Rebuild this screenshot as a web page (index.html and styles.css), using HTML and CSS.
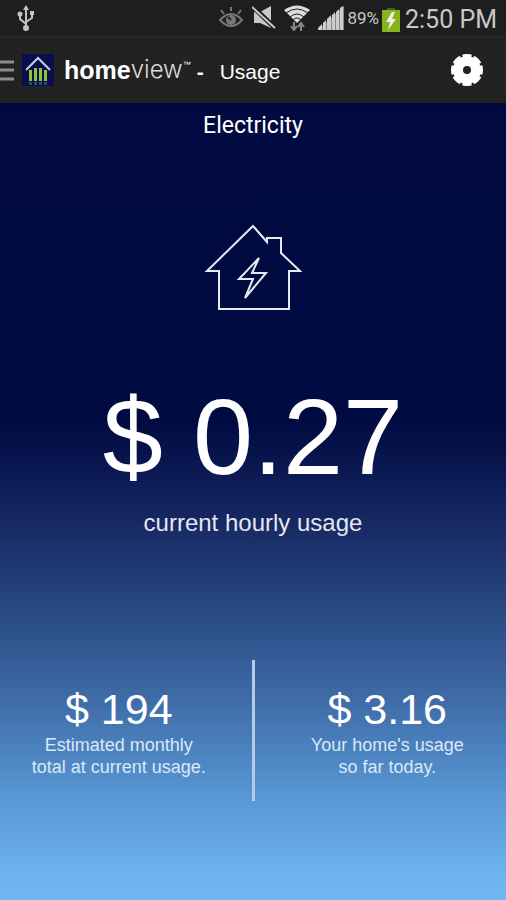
FILE: index.html
```html
<!DOCTYPE html>
<html lang="en">
<head>
    <meta charset="UTF-8">
    <meta name="viewport" content="width=device-width, initial-scale=1.0">
    <title>homeview - Usage</title>
    <link rel="stylesheet" href="styles.css">
</head>
<body>
    <div class="status-bar">
        <svg class="usb" width="18" height="26" viewBox="0 0 18 26" fill="none" stroke="#c4c4c4" stroke-width="2">
            <path d="M9 3v19M9 19l-6-5V9M9 17l6-4V8"/>
            <path d="M9 0l3 5H6z" fill="#c4c4c4" stroke="none"/>
            <circle cx="9" cy="23" r="3" fill="#c4c4c4" stroke="none"/>
            <circle cx="3" cy="9" r="2.5" fill="#c4c4c4" stroke="none"/>
            <path d="M13 6h4v4h-4z" fill="#c4c4c4" stroke="none"/>
        </svg>
        <div class="status-icons">
            <svg width="26" height="22" viewBox="0 0 26 22" fill="none" stroke="#777" stroke-width="2">
                <path d="M2 13Q13 1 24 13Q13 25 2 13z"/>
                <circle cx="13" cy="13" r="5" fill="#777" stroke="none"/>
                <path d="M10 10l3 3" stroke="#222"/>
                <path d="M3 3l3 4M13 0v4M23 3l-3 4"/>
            </svg>
            <svg width="24" height="26" viewBox="0 0 24 26">
                <path d="M2 7h6l11-6v22L8 18H2z" fill="#c8c8c8"/>
                <path d="M0 1l23 22" stroke="#1e1e1e" stroke-width="5"/>
                <path d="M0 2l23 21" stroke="#c8c8c8" stroke-width="2"/>
            </svg>
            <svg width="26" height="26" viewBox="0 0 26 26">
                <path d="M0 5Q13-4 26 5L13 18z" fill="#ddd"/>
                <path d="M2 8Q13 0 24 8M6 12Q13 6 20 12M9 15Q13 11 17 15" fill="none" stroke="#1e1e1e"/>
                <path d="M10 17v7M7 21l3 4 3-4M17 26v-7M14 22l3-4 3 4" fill="none" stroke="#888" stroke-width="2"/>
            </svg>
            <svg width="26" height="24" viewBox="0 0 26 24">
                <path d="M0 24L26 0v24z" fill="#888"/>
                <path d="M0 24v-2l4-4v6zM5 24v-7l3-3v10zM9 24V13l4-4v15zM14 24V9l3-3v18zM18 24V6l3-3v21zM22 24V2l3-2v24z" fill="#ccc"/>
            </svg>
            <span class="percent">89%</span>
            <svg class="battery" width="18" height="24" viewBox="0 0 18 24">
                <path d="M5 0h8v3H5z" fill="#456123"/>
                <path d="M0 2h18v22H0z" fill="#85b51b"/>
                <path d="M10 4L4 14h4l-2 8 8-11h-4l3-7z" fill="#eee"/>
            </svg>
            <span class="clock">2:50 PM</span>
        </div>
    </div>

    <header class="header">
        <button class="menu-btn" aria-label="Menu">
            <svg width="14" height="22" viewBox="0 0 14 22" stroke="#8e8e8e" stroke-width="3">
                <path d="M0 3h14M0 11h14M0 20h14"/>
            </svg>
        </button>
        <svg class="logo" width="32" height="32" viewBox="0 0 32 32">
            <path d="M0 0h32v32H0z" fill="#080f4c"/>
            <path d="M7 16h3v11H7zM12 14h3v13h-3zM17 14h3v13h-3zM22 16h3v11h-3z" fill="#91c23b"/>
            <path d="M7 28h3v3H7zM12 28h3v3h-3zM17 28h3v3h-3zM22 28h3v3h-3z" fill="#304c58"/>
            <path d="M4 16L16 4l12 12" fill="none" stroke="#c8cedd" stroke-width="2"/>
        </svg>
        <h1 class="brand"><b>home</b><span class="view">view</span><span class="tm">™</span></h1>
        <span class="page-name"><span class="dash">-</span>Usage</span>
        <button class="settings-btn" aria-label="Settings">
            <svg width="34" height="34" viewBox="0 0 34 34" fill="none">
                <circle cx="17" cy="17" r="10" stroke="#fff" stroke-width="12"/>
                <circle cx="17" cy="17" r="16" stroke="#222" stroke-width="4" pathLength="80" stroke-dasharray="2 8" stroke-dashoffset="-4"/>
            </svg>
        </button>
    </header>

    <main class="usage">
        <h2 class="title">Electricity</h2>
        <svg class="house" width="98" height="90" viewBox="0 0 98 90" fill="none" stroke="#e8eaf2" stroke-width="2">
            <path d="M49 3L3 48H15V86H85V48H96L77 30V15H63V19z"/>
            <path d="M55 35L35 56H49L41 75L62 50H48z"/>
        </svg>
        <div class="amount">$ 0.27</div>
        <p class="caption">current hourly usage</p>
        <div class="totals">
            <section class="total">
                <div class="total-amount">$ 194</div>
                <p>Estimated monthly<br>total at current usage.</p>
            </section>
            <section class="total">
                <div class="total-amount">$ 3.16</div>
                <p>Your home's usage<br>so far today.</p>
            </section>
        </div>
    </main>
</body>
</html>
```

FILE: styles.css
```css
* {
    box-sizing: border-box;
}

body {
    margin: 0;
    min-height: 100vh;
    display: flex;
    flex-direction: column;
    font-family: "Liberation Sans", Arial, sans-serif;
    background: #222;
    color: #fff;
}

h1, h2, p {
    margin: 0;
    font-weight: normal;
}

button {
    padding: 0;
    border: none;
    background: none;
    cursor: pointer;
}

svg {
    display: block;
    flex: none;
}

.status-bar {
    display: flex;
    justify-content: space-between;
    align-items: center;
    height: 37px;
    padding: 0 9px 0 17px;
    background: #1e1e1e;
    border-bottom: 1px solid #292929;
    font-family: Roboto, sans-serif;
    color: #c8c8c8;
}

.status-icons {
    display: flex;
    align-items: center;
    gap: 8px;
}

.percent {
    font-size: 17px;
    margin: 0 -5px;
}

.battery {
    margin: 3px -3px 0 0;
}

.clock {
    font-size: 25px;
    line-height: 30px;
    padding-top: 4px;
}

.header {
    display: flex;
    align-items: center;
    height: 66px;
    padding-right: 22px;
}

.logo {
    margin: 0 10px 0 8px;
}

.brand {
    display: flex;
    font-size: 25px;
    line-height: 30px;
}

.view {
    font-family: Inter, sans-serif;
    font-weight: 300;
    font-size: 24px;
    color: #ddd;
}

.tm {
    font-size: 8px;
    line-height: 20px;
}

.page-name {
    padding-top: 4px;
    font-size: 21px;
}

.dash {
    margin: 0 16px 0 6px;
    font-weight: bold;
}

.settings-btn {
    margin-left: auto;
}

.usage {
    flex: 1;
    display: flex;
    flex-direction: column;
    align-items: center;
    background: linear-gradient(#000a40 0%, #000b42 40%, #13245e 51%, #284780 63%, #3f6ca8 75%, #5797d3 87%, #6eb3f0 97%, #70b7f4 100%);
}

.title {
    margin-top: 8px;
    font-family: Roboto, sans-serif;
    font-size: 23px;
    line-height: 30px;
}

.house {
    margin-top: 82px;
}

.amount {
    margin-top: 64px;
    font-size: 108px;
    line-height: 120px;
}

.caption {
    margin-top: 12px;
    font-size: 24px;
    line-height: 28px;
    color: #e4e7f0;
}

.totals {
    align-self: stretch;
    display: flex;
    margin-top: 123px;
}

.total {
    flex: 1;
    height: 141px;
    padding: 24px 14px 0 0;
    text-align: center;
    font-size: 18px;
    line-height: 22px;
    color: #dae8f8;
}

.total + .total {
    padding: 24px 0 0 14px;
    border-left: 3px solid #b5c9e8;
}

.total-amount {
    font-size: 43px;
    line-height: 50px;
    color: #fff;
}
```
